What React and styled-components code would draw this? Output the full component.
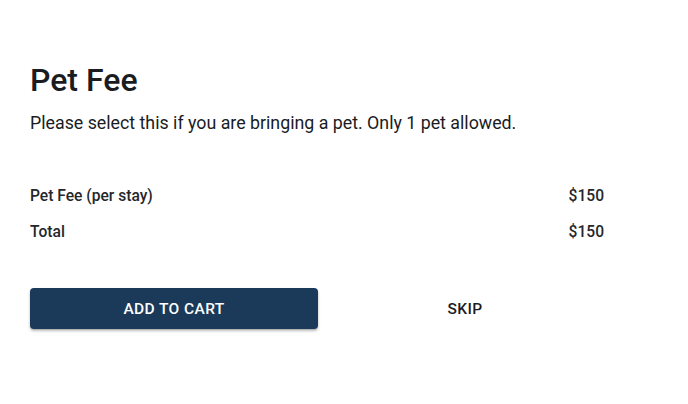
import React from "react";
import styled, { createGlobalStyle } from "styled-components";

const Global = createGlobalStyle`
  html, body { margin: 0; padding: 0; background: #fff; }
  body { font-family: Roboto, "Noto Sans", Arial, sans-serif; color: #1a1c1f; }
`;

const Page = styled.div`
  width: 688px;
  height: 404px;
  box-sizing: border-box;
  padding: 60px 76px 0 30px;
  display: flex;
  flex-direction: column;
`;

const Title = styled.h1`
  margin: 0;
  font-size: 32px;
  line-height: 40px;
  font-weight: 500;
  color: #1a1c1f;
`;

const Subtitle = styled.p`
  margin: 10px 0 0;
  font-size: 17.8px;
  line-height: 26px;
  font-weight: 400;
  color: #1a1c1f;
`;

const Summary = styled.div`
  margin-top: 48px;
  display: flex;
  flex-direction: column;
  gap: 12px;
  padding-right: 8px;
`;

const Row = styled.div`
  display: flex;
  justify-content: space-between;
  font-size: 15.6px;
  line-height: 24px;
  font-weight: 500;
  color: #25272a;
`;

const Actions = styled.div`
  margin-top: 44px;
  display: grid;
  grid-template-columns: 288px 1fr;
`;

const Button = styled.button`
  height: 41px;
  border: none;
  border-radius: 4px;
  font-family: inherit;
  font-size: 15.5px;
  font-weight: 500;
  letter-spacing: 0.4px;
  text-transform: uppercase;
  cursor: pointer;
  background: ${(p) => (p.$primary ? "#1b3a5a" : "transparent")};
  color: ${(p) => (p.$primary ? "#ffffff" : "#1a1c1f")};
  box-shadow: ${(p) =>
    p.$primary ? "0 2px 3px rgba(0,0,0,0.25), 0 1px 1px rgba(0,0,0,0.12)" : "none"};
`;

export default function App() {
  return (
    <>
      <Global />
      <Page>
        <Title>Pet Fee</Title>
        <Subtitle>Please select this if you are bringing a pet. Only 1 pet allowed.</Subtitle>
        <Summary>
          <Row>
            <span>Pet Fee (per stay)</span>
            <span>$150</span>
          </Row>
          <Row>
            <span>Total</span>
            <span>$150</span>
          </Row>
        </Summary>
        <Actions>
          <Button $primary>Add to cart</Button>
          <Button>Skip</Button>
        </Actions>
      </Page>
    </>
  );
}
